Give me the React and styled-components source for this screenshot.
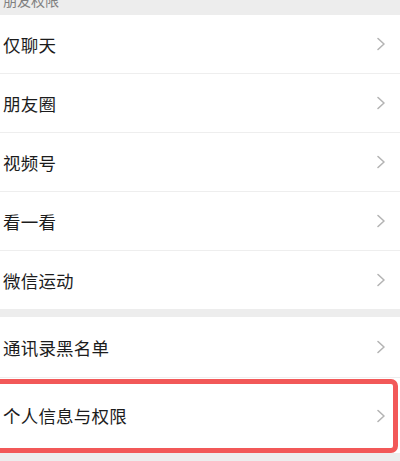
import React from 'react';
import styled, { createGlobalStyle } from 'styled-components';

const GlobalStyle = createGlobalStyle`
  html, body {
    margin: 0;
    padding: 0;
    background: #ededed;
    font-family: "Noto Sans CJK SC", "Noto Sans", sans-serif;
  }
`;

const Page = styled.div`
  width: 400px;
  height: 461px;
  overflow: hidden;
  background: #ededed;
`;

const SectionTitle = styled.div`
  height: 15px;
  overflow: hidden;
  padding-left: 3px;
  color: #808080;
  font-size: 14px;
  & > span {
    display: block;
    line-height: 14px;
    margin-top: -7px;
  }
`;

const Group = styled.div`
  background: #fff;
  margin-bottom: ${({ $gap }) => $gap || 0}px;
`;

const Row = styled.div`
  position: relative;
  display: flex;
  align-items: center;
  height: ${({ $h }) => $h || 58}px;
  padding: 0 14px 0 3px;
  border-bottom: 1px solid #eeeeee;
  &:last-child { border-bottom: none; }
`;

const Label = styled.div`
  flex: 1;
  font-size: 17.5px;
  color: #1c1c1c;
  letter-spacing: 0.2px;
`;

const Highlight = styled.div`
  position: absolute;
  top: 1px;
  left: -8px;
  right: 2px;
  bottom: 0;
  border: 5px solid #f25858;
  border-radius: 7px;
  pointer-events: none;
`;

function Chevron() {
  return (
    <svg width="10" height="14" viewBox="0 0 10 14">
      <polyline points="2,1.5 8,7 2,12.5" fill="none" stroke="#b4b4b4" strokeWidth="1.6" strokeLinecap="round" strokeLinejoin="round" />
    </svg>
  );
}

const friendItems = ['仅聊天', '朋友圈', '视频号', '看一看', '微信运动'];

export default function App() {
  return (
    <Page>
      <GlobalStyle />
      <SectionTitle><span>朋友权限</span></SectionTitle>
      <Group $gap={8}>
        {friendItems.map(t => (
          <Row key={t}>
            <Label>{t}</Label>
            <Chevron />
          </Row>
        ))}
      </Group>
      <Group>
        <Row $h={60}>
          <Label>通讯录黑名单</Label>
          <Chevron />
        </Row>
        <Row $h={75}>
          <Label>个人信息与权限</Label>
          <Chevron />
          <Highlight />
        </Row>
      </Group>
    </Page>
  );
}
